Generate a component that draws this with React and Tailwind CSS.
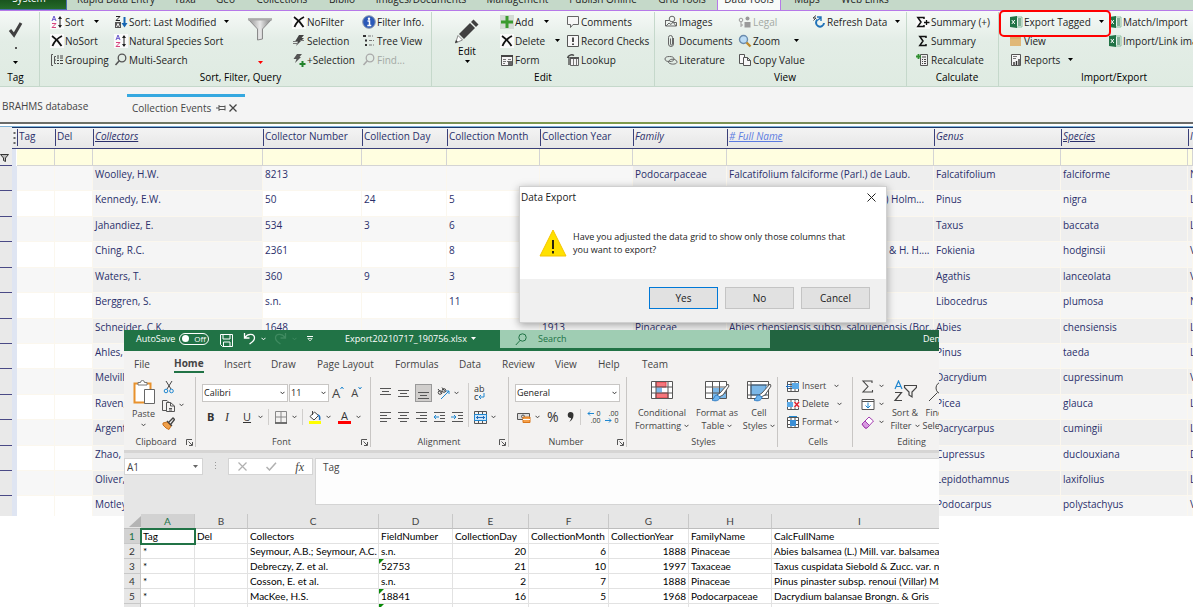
import { useState } from 'react';
import { clsx } from 'clsx';

/* ---------- Icons ---------- */

const Svg = ({ w = 14, h = 14, box, children, className }) => (
  <svg
    width={w}
    height={h}
    viewBox={box || `0 0 ${w} ${h}`}
    fill="none"
    aria-hidden="true"
    className={clsx('shrink-0', className)}
  >
    {children}
  </svg>
);

const Caret = ({ className = 'text-black' }) => (
  <Svg w={5} h={3} className={className}>
    <path d="M0 0h5L2.5 3z" fill="currentColor" />
  </Svg>
);

const Chevron = ({ className = 'text-[#444]' }) => (
  <Svg w={5} h={4} className={className}>
    <path d="M.5.8l2 2 2-2" stroke="currentColor" />
  </Svg>
);

const SortIcon = () => (
  <Svg>
    <rect width="14" height="14" fill="#fafafa" />
    <path d="M2 6l2-5 2 5M2.7 4.4h2.6" stroke="#6a5acd" />
    <path d="M2 8.5h4l-4 4h4" stroke="#d8457e" />
    <path d="M10 2v10" stroke="#222" />
    <path d="M8 4l2-3 2 3zM8 10l2 3 2-3z" fill="#222" />
  </Svg>
);

const SortDownIcon = () => (
  <Svg>
    <path d="M2 1.5h4L2 5.5h4" stroke="#222" />
    <path d="M1 7h6v6H1z" fill="#555" />
    <path d="M2.5 12L4 8.500l1.500 3.500" stroke="#fff" />
    <path d="M10.500 2v8" stroke="#1565b3" strokeWidth="2" />
    <path d="M7.500 8h6l-3 4.500z" fill="#1565b3" />
  </Svg>
);

const CrossIcon = () => (
  <Svg>
    <rect width="14" height="14" fill="#fafafa" />
    <path d="M2 2c3 2 7 6 9.500 10M12 2C8 4 4 8 2.500 12" stroke="#111" strokeWidth="1.800" />
  </Svg>
);

const GroupIcon = () => (
  <Svg>
    <path d="M3 1.500H1.500v11H3M6 3.500H4.500v7H6M4.500 7H6" stroke="#555" />
    <path d="M7 3h2M10 3h3M7 5h2M10 5h3M7 7.500h2M10 7.500h3M7 10.500h2M10 10.500h3" stroke="#444" />
  </Svg>
);

const SearchIcon = ({ color = '#555' }) => (
  <Svg>
    <circle cx="8" cy="5" r="3.800" stroke={color} strokeWidth="1.300" />
    <path d="M5.300 7.800L1.500 12" stroke={color} strokeWidth="1.600" />
  </Svg>
);

const BoltIcon = ({ plus }) => (
  <Svg>
    {plus ? (
      <>
        <path d="M5 1h5L7.500 4H9L3 10l1.500-4H1.500z" fill="#555" />
        <path d="M10.500 8v6M7.500 11h6" stroke="#22822b" strokeWidth="2" />
      </>
    ) : (
      <>
        <path d="M7 1h5L9.500 4H12L4 12l2-4.500H3z" fill="#444" />
        <path d="M1 7.500h5M1 9.500h5M8 6.500h4" stroke="#777" />
      </>
    )}
  </Svg>
);

const InfoIcon = () => (
  <Svg>
    <circle cx="7" cy="7" r="6.300" fill="#2b59b8" stroke="#8d99ad" />
    <circle cx="7" cy="3.700" r="1.200" fill="#fff" />
    <path d="M5.500 6h2v4.500M5.300 10.500h4" stroke="#fff" strokeWidth="1.500" />
  </Svg>
);

const TreeIcon = () => (
  <Svg>
    <path d="M1 2h3M3 6.500h2M3 11h2" stroke="#333" strokeWidth="2" />
    <path d="M6 2h5M7 6.500h5M7 11h5" stroke="#777" strokeDasharray="3 1" />
  </Svg>
);

const FunnelIcon = () => (
  <Svg w={26} h={24}>
    <defs>
      <linearGradient id="funnel" x1="0" x2="1">
        <stop offset="0" stopColor="#8c8c8c" />
        <stop offset=".5" stopColor="#e8e8e8" />
        <stop offset="1" stopColor="#777" />
      </linearGradient>
    </defs>
    <path d="M1 2h24L15.500 12v10l-5 1V12z" fill="url(#funnel)" stroke="#8a8a8a" />
    <path d="M1 2.500h24" stroke="#aaa" strokeWidth="2" />
  </Svg>
);

const PencilIcon = () => (
  <Svg w={26} h={26}>
    <path d="M5 16L16 5l5 5L10 21z" fill="#404040" />
    <path d="M17 4l2.500-2.500 5 5L22 9z" fill="#404040" />
    <path d="M4 17.500l4.500 4.500L1.500 25z" fill="#fff" stroke="#888" />
    <path d="M1 25l1-3 2 2z" fill="#333" />
  </Svg>
);

const PlusIcon = () => (
  <Svg>
    <rect width="14" height="14" fill="#d4dcd5" />
    <path d="M7 1v12M1 7h12" stroke="#3b9a2f" strokeWidth="3" />
  </Svg>
);

const FormIcon = () => (
  <Svg>
    <path d="M1.500 2.500h11v10h-11z" fill="#f4f4f4" stroke="#555" />
    <path d="M1 3h12" stroke="#444" strokeWidth="2" />
    <path d="M3 6.500h3M3 8.500h3M3 10.500h2M8 6.500h3M7 8.500h2" stroke="#777" />
    <path d="M8 8h4v4H8z" fill="#666" />
  </Svg>
);

const CommentIcon = () => (
  <Svg>
    <path d="M1.500 1.500h11v8H7L4.500 12.500V9.500h-3z" fill="#f7f7f7" stroke="#666" />
  </Svg>
);

const CheckRecordIcon = () => (
  <Svg>
    <path d="M1.500 1.500h11v11h-11z" fill="#f7f7f7" stroke="#555" />
    <path d="M7 3.500V8M7 9.500V11" stroke="#222" strokeWidth="1.600" />
  </Svg>
);

const LookupIcon = () => (
  <Svg>
    <path d="M4.500 4.500h8v8h-8z" fill="#f4f4f4" stroke="#666" />
    <path d="M4 5h9" stroke="#555" strokeWidth="2" />
    <path d="M7.500 6v6M10.500 6v6" stroke="#777" />
    <path d="M3 4v8M1.500 5C2 2 6 1 8 2.500" stroke="#444" strokeWidth="1.300" />
  </Svg>
);

const ImagesIcon = ({ color = '#666' }) => (
  <Svg>
    <circle cx="8" cy="4" r="2.800" stroke={color} />
    <path d="M1.500 5.500h4M1.500 5v6h11V7.500H10M2 11l3-3 2 1.500L9 7l3 4" stroke={color} />
  </Svg>
);

const ClipIcon = () => (
  <Svg>
    <path d="M9.500 4v6a2.500 2.500 0 01-5 0V3.500a2 2 0 014 0V10a1 1 0 01-2 0V4.500" stroke="#666" />
  </Svg>
);

const LiteratureIcon = () => (
  <Svg>
    <ellipse cx="5.500" cy="6" rx="4.500" ry="2.500" stroke="#666" />
    <path d="M4 8c0 4 9 4 9 1S6 5 5 8" stroke="#666" />
  </Svg>
);

const LegalIcon = () => (
  <Svg>
    <circle cx="9.500" cy="3.500" r="2" fill="#9a9a9a" />
    <path d="M6.500 12.500V7h6v5.500z" fill="#9a9a9a" />
    <circle cx="3" cy="5" r="1.800" stroke="#9a9a9a" />
    <path d="M3 7v5M3 10h2" stroke="#9a9a9a" />
  </Svg>
);

const ZoomIcon = () => (
  <Svg>
    <circle cx="5.500" cy="5.500" r="4" fill="#bcdcf5" stroke="#6b8cae" strokeWidth="1.400" />
    <path d="M8.500 8.500l4 4" stroke="#c08a2c" strokeWidth="2.400" />
  </Svg>
);

const CopyIcon = () => (
  <Svg>
    <path d="M1.500 1.500h5v9h-5z" fill="#f7f7f7" stroke="#555" />
    <path d="M5.500 4.500h4l3 3v5h-7zM9.500 4.500v3h3" fill="#f7f7f7" stroke="#555" />
  </Svg>
);

const RefreshIcon = () => (
  <Svg>
    <path d="M5.500 4.500a4 4 0 106.500 3.500" stroke="#1f72b8" strokeWidth="2" />
    <path d="M5 2h4v4M9 2.500L6 5" stroke="#1f72b8" strokeWidth="1.400" />
    <path d="M4 .5L1 3h3L1.500 5.500" stroke="#444" />
  </Svg>
);

const SigmaIcon = ({ plus }) => (
  <Svg>
    {plus && <rect width="14" height="14" fill="#fafafa" />}
    <g transform={plus ? undefined : 'translate(2 0)'}>
      <path d="M8 4V2.500H1.800L5 7l-3.200 4.500H8V10" stroke="#111" strokeWidth="1.500" />
    </g>
    {plus && <path d="M10.500 5v5M8 7.500h5.500" stroke="#111" strokeWidth="1.300" />}
  </Svg>
);

const CalcIcon = () => (
  <Svg>
    <path d="M4.500 1.500h7v11h-7z" fill="#eee" stroke="#555" />
    <path d="M6 4h4M6 6.500h1M8 6.500h2M6 8.500h1M8 8.500h2M6 10.500h1M8 10.500h2" stroke="#444" />
    <path d="M2.500 1v5M0 3.500h5" stroke="#2f8f2f" strokeWidth="1.800" />
  </Svg>
);

const ExcelIcon = () => (
  <Svg>
    <path d="M7 2h6v10H7z" fill="#e8f2ec" stroke="#8fbfa3" />
    <path d="M9 4h3M9 6h3M9 8h3M9 10h3" stroke="#217346" />
    <path d="M1 2l7-1v12l-7-1z" fill="#217346" />
    <path d="M2.800 5l3 4M5.800 5l-3 4" stroke="#fff" />
  </Svg>
);

const FolderIcon = () => (
  <Svg>
    <path d="M1 2h11v10H1z" fill="#e0b878" />
    <path d="M1 4h11" stroke="#cfa565" />
  </Svg>
);

const ReportIcon = () => (
  <Svg>
    <path d="M2.500 1.500h9v11h-9z" fill="#f5f5f5" stroke="#555" />
    <path d="M4 3.500h4M4 5.500h3" stroke="#777" />
    <path d="M5 12V9M7.500 12V8M10 12V6" stroke="#333" strokeWidth="1.400" />
  </Svg>
);

/* ---------- BRAHMS ribbon ---------- */

const MAIN_TABS = [
  { name: 'Rapid Data Entry', width: 'w-[98px]' },
  { name: 'Taxa', width: 'w-[40px]' },
  { name: 'Geo', width: 'w-[41px]' },
  { name: 'Collections', width: 'w-[72px]' },
  { name: 'Biblio', width: 'w-[48px]' },
  { name: 'Images/Documents', width: 'w-[110px]' },
  { name: 'Management', width: 'w-[83px]' },
  { name: 'Publish Online', width: 'w-[88px]' },
  { name: 'Grid Tools', width: 'w-[70px]' },
  { name: 'Data Tools', width: 'w-[64px]', active: true },
  { name: 'Maps', width: 'w-[52px]' },
  { name: 'Web Links', width: 'w-[64px]' },
];

const ToolButton = ({ icon, label, arrow, disabled }) => (
  <button
    type="button"
    disabled={disabled}
    className={clsx(
      'flex h-[19px] items-center whitespace-nowrap',
      disabled ? 'text-[#a3a9a4]' : 'text-[#1e1e1e]'
    )}
  >
    {icon}
    <span className="ml-px">{label}</span>
    {arrow && (
      <span className={arrow}>
        <Caret />
      </span>
    )}
  </button>
);

const ToolColumn = ({ className, children }) => (
  <div className={clsx('flex shrink-0 flex-col items-start', className)}>{children}</div>
);

const RibbonGroup = ({ title, className, children }) => (
  <section className={clsx('flex shrink-0 flex-col border-r border-[#c5d8cb]', className)}>
    <div className="flex h-[58px]">{children}</div>
    <h2 className="text-center">{title}</h2>
  </section>
);

const MainRibbon = () => (
  <header>
    <nav className="flex h-[11px] items-end overflow-hidden border-b border-[#b679e8] bg-[#c5d9c9] whitespace-nowrap">
      <button
        type="button"
        className="h-5 w-[67px] shrink-0 border-r border-b border-[#4a6cb0] bg-linear-to-b from-[#0d3d10] to-[#256b2a] pr-2 pb-1 leading-[14px] text-white"
      >
        System
      </button>
      {MAIN_TABS.map((tab) => (
        <button
          key={tab.name}
          type="button"
          className={clsx(
            'h-5 shrink-0 pb-[2px] leading-[14px] text-[#1e1e1e]',
            tab.width,
            tab.active && 'border-x border-[#b679e8] bg-[#f7faf8]'
          )}
        >
          {tab.name}
        </button>
      ))}
    </nav>

    <div className="flex h-[76px] border-b border-[#c5d8cb] bg-linear-to-b from-[#f6f9f7] via-[#e3ede6] via-40% to-[#dfebe2] pt-px">
      <RibbonGroup title="Tag" className="w-[40px] pr-2">
        <button type="button" className="flex w-8 flex-col items-center pt-[9px]" aria-label="Tag record">
          <Svg w={16} h={18}>
            <path d="M2 9l4 5L13 2" stroke="#404040" strokeWidth="3" />
          </Svg>
          <span className="mt-2 size-[2px] bg-[#555]" />
          <span className="mt-3">
            <Caret />
          </span>
        </button>
      </RibbonGroup>

      <RibbonGroup title="Sort, Filter, Query" className="w-[392px] pl-[10px]">
        <ToolColumn className="w-[64px]">
          <ToolButton icon={<SortIcon />} label="Sort" arrow="ml-[10px]" />
          <ToolButton icon={<CrossIcon />} label="NoSort" />
          <ToolButton icon={<GroupIcon />} label="Grouping" />
        </ToolColumn>
        <ToolColumn className="w-[130px]">
          <ToolButton icon={<SortDownIcon />} label="Sort: Last Modified" arrow="ml-[8px]" />
          <ToolButton icon={<SortIcon />} label="Natural Species Sort" />
          <ToolButton icon={<SearchIcon />} label="Multi-Search" />
        </ToolColumn>
        <button type="button" className="flex w-[32px] shrink-0 flex-col items-center pt-[5px]" aria-label="Filter">
          <FunnelIcon />
          <span className="mt-5">
            <Caret className="text-[#ff0000]" />
          </span>
        </button>
        <ToolColumn className="ml-4 w-[70px]">
          <ToolButton icon={<CrossIcon />} label="NoFilter" />
          <ToolButton icon={<BoltIcon />} label="Selection" />
          <ToolButton icon={<BoltIcon plus />} label="+Selection" />
        </ToolColumn>
        <ToolColumn>
          <ToolButton icon={<InfoIcon />} label="Filter Info." />
          <ToolButton icon={<TreeIcon />} label="Tree View" />
          <ToolButton icon={<SearchIcon color="#aaa" />} label="Find..." disabled />
        </ToolColumn>
      </RibbonGroup>

      <RibbonGroup title="Edit" className="w-[223px]">
        <button type="button" className="flex w-[68px] shrink-0 flex-col items-center pt-[6px] pl-[2px] leading-[14px]">
          <PencilIcon />
          <span>Edit</span>
          <span className="mt-[2px]">
            <Caret />
          </span>
        </button>
        <ToolColumn className="w-[66px]">
          <ToolButton icon={<PlusIcon />} label="Add" arrow="ml-[10px]" />
          <ToolButton icon={<CrossIcon />} label="Delete" arrow="ml-[10px]" />
          <ToolButton icon={<FormIcon />} label="Form" />
        </ToolColumn>
        <ToolColumn>
          <ToolButton icon={<CommentIcon />} label="Comments" />
          <ToolButton icon={<CheckRecordIcon />} label="Record Checks" />
          <ToolButton icon={<LookupIcon />} label="Lookup" />
        </ToolColumn>
      </RibbonGroup>

      <RibbonGroup title="View" className="w-[252px] pl-[9px]">
        <ToolColumn className="w-[74px]">
          <ToolButton icon={<ImagesIcon />} label="Images" />
          <ToolButton icon={<ClipIcon />} label="Documents" />
          <ToolButton icon={<LiteratureIcon />} label="Literature" />
        </ToolColumn>
        <ToolColumn className="w-[74px]">
          <ToolButton icon={<LegalIcon />} label="Legal" disabled />
          <ToolButton icon={<ZoomIcon />} label="Zoom" arrow="ml-[14px]" />
          <ToolButton icon={<CopyIcon />} label="Copy Value" />
        </ToolColumn>
        <ToolColumn>
          <ToolButton icon={<RefreshIcon />} label="Refresh Data" arrow="ml-[8px]" />
        </ToolColumn>
      </RibbonGroup>

      <RibbonGroup title="Calculate" className="w-[92px] pl-[9px]">
        <ToolColumn>
          <ToolButton icon={<SigmaIcon plus />} label="Summary (+)" />
          <ToolButton icon={<SigmaIcon />} label="Summary" />
          <ToolButton icon={<CalcIcon />} label="Recalculate" />
        </ToolColumn>
      </RibbonGroup>

      <RibbonGroup title="Import/Export" className="w-[221px] pl-[10px]">
        <ToolColumn className="w-[99px]">
          <div className="relative">
            <ToolButton icon={<ExcelIcon />} label="Export Tagged" arrow="ml-[8px]" />
            {/* Callout round the export command */}
            <span className="pointer-events-none absolute -top-[2px] -right-[7px] -bottom-[6px] -left-[10px] rounded-[5px] border-2 border-[#f00]" />
          </div>
          <ToolButton icon={<FolderIcon />} label="View" />
          <ToolButton icon={<ReportIcon />} label="Reports" arrow="ml-[8px]" />
        </ToolColumn>
        <ToolColumn>
          <ToolButton icon={<ExcelIcon />} label="Match/Import" />
          <ToolButton icon={<ExcelIcon />} label="Import/Link images" />
        </ToolColumn>
      </RibbonGroup>
    </div>
  </header>
);

const DocumentTabs = () => (
  <nav className="flex h-[35px] items-start bg-[#f4f4f4] text-[#444]">
    <button type="button" className="h-[35px] w-[127px] pt-[3px] pl-[2px] text-left">
      BRAHMS database
    </button>
    <div className="mt-[7px] flex h-[24px] w-[118px] items-center border-t-3 border-[#35a8e0] pl-[5px] whitespace-nowrap">
      <button type="button">Collection Events</button>
      <button type="button" aria-label="Pin tab" className="ml-[5px]">
        <Svg w={10} h={8}>
          <path d="M0 4h3M3 1v6M3 2.500h6M3 5.500h6M9 1.500v5" stroke="#555" />
        </Svg>
      </button>
      <button type="button" aria-label="Close tab" className="ml-[3px]">
        <Svg w={8} h={8}>
          <path d="M.5.5l7 7M7.500.5l-7 7" stroke="#444" strokeWidth="1.300" />
        </Svg>
      </button>
    </div>
  </nav>
);

/* ---------- Data grid ---------- */

const COLUMNS = [
  { key: 'tag', label: 'Tag', width: 'w-[38px]' },
  { key: 'del', label: 'Del', width: 'w-[38px]' },
  { key: 'collectors', label: 'Collectors', width: 'w-[170px]', shaded: true, style: 'italic underline' },
  { key: 'number', label: 'Collector Number', width: 'w-[99px]' },
  { key: 'day', label: 'Collection Day', width: 'w-[85px]' },
  { key: 'month', label: 'Collection Month', width: 'w-[93px]' },
  { key: 'year', label: 'Collection Year', width: 'w-[93px]' },
  { key: 'family', label: 'Family', width: 'w-[94px]', shaded: true, style: 'italic' },
  { key: 'fullName', label: '# Full Name', width: 'w-[207px]', shaded: true, style: 'italic underline text-[#5b7be0]' },
  { key: 'genus', label: 'Genus', width: 'w-[127px]', shaded: true, style: 'italic' },
  { key: 'species', label: 'Species', width: 'w-[127px]', shaded: true, style: 'italic underline' },
  { key: 'next', label: 'I', width: 'w-auto', shaded: true, style: 'italic' },
];

const RECORDS = [
  { collectors: 'Woolley, H.W.', number: '8213', family: 'Podocarpaceae', fullName: 'Falcatifolium falciforme (Parl.) de Laub.', genus: 'Falcatifolium', species: 'falciforme', next: 'N' },
  { collectors: 'Kennedy, E.W.', number: '50', day: '24', month: '5', fullName: 'Pinus nigra ssp. pallasiana (Lamb.) Holm...', genus: 'Pinus', species: 'nigra', next: 'L' },
  { collectors: 'Jahandiez, E.', number: '534', day: '3', month: '6', genus: 'Taxus', species: 'baccata', next: 'L' },
  { collectors: 'Ching, R.C.', number: '2361', month: '8', fullName: 'Fokienia hodginsii (Dunn) A.Henry & H. H....', genus: 'Fokienia', species: 'hodginsii', next: 'V' },
  { collectors: 'Waters, T.', number: '360', day: '9', month: '3', genus: 'Agathis', species: 'lanceolata', next: 'V' },
  { collectors: 'Berggren, S.', number: 's.n.', month: '11', genus: 'Libocedrus', species: 'plumosa', next: 'N' },
  { collectors: 'Schneider, C.K.', number: '1648', year: '1913', family: 'Pinaceae', fullName: 'Abies chensiensis subsp. salouenensis (Bor...', genus: 'Abies', species: 'chensiensis', next: 'L' },
  { collectors: 'Ahles,', genus: 'Pinus', species: 'taeda', next: 'L' },
  { collectors: 'Melville', genus: 'Dacrydium', species: 'cupressinum', next: 'V' },
  { collectors: 'Raven,', genus: 'Picea', species: 'glauca', next: 'L' },
  { collectors: 'Argent', genus: 'Dacrycarpus', species: 'cumingii', next: 'L' },
  { collectors: 'Zhao,', genus: 'Cupressus', species: 'duclouxiana', next: 'D' },
  { collectors: 'Oliver,', genus: 'Lepidothamnus', species: 'laxifolius', next: 'L' },
  { collectors: 'Motley', genus: 'Podocarpus', species: 'polystachyus', next: 'V' },
];

const cellColor = (shaded, odd) => {
  if (shaded) return odd ? 'bg-[#eeeeee]' : 'bg-[#f5f5f5]';
  return odd ? 'bg-[#f7f7f7]' : 'bg-white';
};

const DataGrid = () => (
  <div className="h-[394px] overflow-hidden">
    {/* Sliver of the start picture behind the grid */}
    <div className="h-[2px] bg-linear-to-r from-[#6a6a6a] via-[#7f9d4a] to-[#6a6a6a]" />
    <div className="h-[3px] border-b border-[#7fb2d8] bg-white" />
    <table className="h-[395px] w-full table-fixed border-separate border-spacing-0 text-left text-[#2a2f6b]">
      <colgroup>
        <col className="w-[12px]" />
        <col className="w-[5px]" />
        {COLUMNS.map((col) => (
          <col key={col.key} className={col.width} />
        ))}
      </colgroup>
      <thead>
        <tr className="h-[22px] bg-linear-to-b from-[#f4f4f4] to-[#e6e6e6]">
          <th className="bg-[#ececec] p-0" />
          <th className="border-t border-b border-t-[#1d3768] border-b-[#3a3f78] p-0">
            <Svg w={3} h={15} className="ml-px">
              <path d="M1.500 1v14" stroke="#666" strokeWidth="2" strokeDasharray="2 3" />
            </Svg>
          </th>
          {COLUMNS.map((col) => (
            <th
              key={col.key}
              className="border-t border-b border-t-[#1d3768] border-b-[#3a3f78] p-0 pt-px align-top font-normal whitespace-nowrap"
            >
              <div className={clsx('h-[17px] border-l border-[#3a3f78] pl-px leading-[15px]', col.style)}>{col.label}</div>
            </th>
          ))}
        </tr>
      </thead>
      <tbody>
        <tr className="h-[17px]">
          <td className="border-b border-[#4a4a86] bg-[#ececec] p-0">
            <Svg w={9} h={9}>
              <path d="M.5 1.500h8L5.500 5v3.500l-2-1V5z" fill="#bbb" stroke="#333" />
            </Svg>
          </td>
          <td className="border-r border-white bg-[#dfe5f2] p-0" />
          {COLUMNS.map((col) => (
            <td key={col.key} className="border-r border-b border-[#d4d4d4] bg-[#fffee0] p-0">
              <input aria-label={`Filter ${col.label}`} className="block h-[15px] w-full px-1 outline-none" />
            </td>
          ))}
        </tr>
        {RECORDS.map((row, i) => (
          <tr key={row.collectors}>
            <td className="border-b border-[#4a4a86] bg-[#e9e9e9] p-0" />
            <td className="bg-[#dfe5f2] p-0" />
            {COLUMNS.map((col) => (
              <td
                key={col.key}
                className={clsx(
                  'border-r border-b border-[#fbf7ee] p-0 pl-[2px] align-top leading-[17px] whitespace-nowrap',
                  cellColor(col.shaded, i % 2 === 0)
                )}
              >
                {row[col.key]}
              </td>
            ))}
          </tr>
        ))}
      </tbody>
    </table>
  </div>
);

/* ---------- Export prompt ---------- */

const ExportDialog = () => (
  <div
    role="dialog"
    aria-labelledby="export-title"
    className="absolute top-[186px] left-[519px] w-[368px] border border-[#d0d0d0] bg-white text-[#1a1a1a] shadow-[0_2px_8px_rgba(0,0,0,0.35)]"
  >
    <div className="flex h-5 items-center justify-between pr-[10px] pl-px">
      <h2 id="export-title">Data Export</h2>
      <button type="button" aria-label="Close">
        <Svg w={9} h={9}>
          <path d="M.5.5l8 8M8.500.5l-8 8" stroke="#222" />
        </Svg>
      </button>
    </div>
    <div className="flex h-[72px] items-center gap-[6px] pl-[19px]">
      <Svg w={28} h={28}>
        <path d="M14 1l13 26H1z" fill="#ffe100" stroke="#f5c400" />
        <path d="M14 11v9M14 22v2.500" stroke="#111" strokeWidth="1.800" />
      </Svg>
      <p className="text-[9px] leading-[13px] whitespace-nowrap">
        Have you adjusted the data grid to show only those columns that
        <br />
        you want to export?
      </p>
    </div>
    <div className="flex h-[43px] items-center justify-end gap-[7px] bg-[#f0f0f0] pr-4 pb-[5px]">
      <button type="button" className="h-[22px] w-[69px] border border-[#0078d7] bg-[#e1e1e1]">
        Yes
      </button>
      <button type="button" className="h-[22px] w-[69px] border border-[#c4c4c4] bg-[#e1e1e1]">
        No
      </button>
      <button type="button" className="h-[22px] w-[69px] border border-[#c4c4c4] bg-[#e1e1e1]">
        Cancel
      </button>
    </div>
  </div>
);

/* ---------- Excel window ---------- */

const XL_TABS = [
  { name: 'File', width: 'w-[40px]' },
  { name: 'Home', width: 'w-[50px]', active: true },
  { name: 'Insert', width: 'w-[47px]' },
  { name: 'Draw', width: 'w-[46px]' },
  { name: 'Page Layout', width: 'w-[78px]' },
  { name: 'Formulas', width: 'w-[64px]' },
  { name: 'Data', width: 'w-[43px]' },
  { name: 'Review', width: 'w-[53px]' },
  { name: 'View', width: 'w-[43px]' },
  { name: 'Help', width: 'w-[44px]' },
  { name: 'Team', width: 'w-[43px]' },
];

const LauncherIcon = () => (
  <Svg w={7} h={7}>
    <path d="M.5 6V.5H6M2.500 2.500l3.500 3.500M6.500 3v3.500H3" stroke="#555" />
  </Svg>
);

const XlGroup = ({ title, launcher, className, children }) => (
  <section className={clsx('flex h-[70px] shrink-0 flex-col border-r border-[#c8c6c4]', className)}>
    <div className="flex h-[60px]">{children}</div>
    <div className="flex h-[10px] items-center pr-[2px] text-[9px] text-[#444]">
      <h3 className="flex-1 text-center">{title}</h3>
      {launcher && (
        <button type="button" aria-label={`${title} settings`}>
          <LauncherIcon />
        </button>
      )}
    </div>
  </section>
);

const IconButton = ({ label, className, arrow, children }) => (
  <button type="button" aria-label={label} className={clsx('flex h-[18px] items-center gap-[4px]', className)}>
    {children}
    {arrow && <Chevron />}
  </button>
);

const Combo = ({ label, value, className }) => (
  <div className={clsx('relative h-[18px] border border-[#c8c6c4] bg-white', className)}>
    <select
      aria-label={label}
      className="block h-4 w-full appearance-none bg-transparent pl-[1px] text-[9px] leading-4 text-[#222] outline-none"
    >
      <option>{value}</option>
    </select>
    <Chevron className="pointer-events-none absolute top-[6px] right-[2px] text-[#333]" />
  </div>
);

const LinesIcon = ({ d }) => (
  <Svg w={13} h={13}>
    <path d={d} stroke="#555" />
  </Svg>
);

const IndentIcon = ({ flip }) => (
  <Svg w={13} h={13}>
    <path d="M1 1.500h11M7 4.500h5M7 7.500h5M1 10.500h11" stroke="#555" />
    {flip ? (
      <path d="M0 6h4.500M3 4l2 2-2 2" stroke="#1f87d0" />
    ) : (
      <path d="M1 6h5M3 4L1 6l2 2" stroke="#1f87d0" />
    )}
  </Svg>
);

const DecimalButton = ({ label, top, bottom, arrowTop }) => (
  <button type="button" aria-label={label} className="flex w-[14px] flex-col text-[7px] leading-[7px] text-[#333]">
    <span className="flex w-full items-center justify-between">
      {arrowTop && (
        <Svg w={7} h={5}>
          <path d="M7 2.500H1M3 .5l-2 2 2 2" stroke="#1f87d0" />
        </Svg>
      )}
      <span className="ml-auto">{top}</span>
    </span>
    <span className="flex w-full items-center justify-between">
      {!arrowTop && (
        <Svg w={7} h={5}>
          <path d="M0 2.500h6M4 .5l2 2-2 2" stroke="#1f87d0" />
        </Svg>
      )}
      <span className="ml-auto">{bottom}</span>
    </span>
  </button>
);

const Brush = () => (
  <>
    <path d="M24 5l-8 9-3 2 2 2 4-2 6-9z" fill="#fff" stroke="#555" />
    <path d="M13 16c-3 0-2 3-5 5 4 2 8 0 8-3z" fill="#6cb4ee" stroke="#2f7cc4" />
  </>
);

const ConditionalIcon = () => (
  <Svg w={24} h={24}>
    <path d="M1.500 2.500h21v17h-21z" fill="#fff" />
    <path d="M6 3h10v5H6zM6 14h12v5H6z" fill="#f5767c" stroke="#e04048" />
    <path d="M6 8.500h6v5H6z" fill="#7cb8e8" />
    <path d="M1.500 2.500h21v17h-21zM1.500 8h21M1.500 14h21M6 2.500v17M18 2.500v17" stroke="#555" />
  </Svg>
);

const FormatTableIcon = () => (
  <Svg w={26} h={24}>
    <path d="M1.500 2.500h21v17h-21z" fill="#fff" />
    <path d="M9 9h13v10H9z" fill="#7cb8e8" />
    <path d="M1.500 2.500h21v17h-21zM1.500 8h21M1.500 14h21M8.500 2.500v17M15.500 2.500v17" stroke="#555" />
    <Brush />
  </Svg>
);

const CellStylesIcon = () => (
  <Svg w={26} h={24}>
    <path d="M1.500 2.500h21v17h-21z" fill="#fff" />
    <path d="M5 6h15v10H5z" fill="#7cb8e8" stroke="#2f7cc4" />
    <path d="M1.500 2.500h21v17h-21zM1.500 6h21M5 2.500v17M1.500 16h21" stroke="#555" />
    <Brush />
  </Svg>
);

const BigButton = ({ icon, top, bottom, className }) => (
  <button
    type="button"
    className={clsx('flex shrink-0 flex-col items-center text-[9px] leading-[13px] whitespace-nowrap text-[#444]', className)}
  >
    {icon}
    <span className="mt-[3px]">{top}</span>
    <span className="flex items-center gap-[3px]">
      {bottom}
      <Chevron />
    </span>
  </button>
);

const CellsIcon = ({ kind }) => (
  <Svg w={14} h={13}>
    <path d="M1.500 1.500h11v10h-11z" fill="#fff" stroke="#555" />
    <path d="M1.500 4.500h11M1.500 8.500h11M5 1.500v10M9 1.500v10" stroke="#555" />
    {kind === 'insert' && (
      <>
        <path d="M6 3h7v6H6z" fill="#5aa9e6" />
        <path d="M6 6.500H0M3 4L.5 6.500 3 9" stroke="#1f6fbf" />
      </>
    )}
    {kind === 'delete' && (
      <>
        <path d="M1 4h6v5H1z" fill="#5aa9e6" />
        <path d="M7 3.500h7v6H7z" fill="#f3f2f1" />
        <path d="M8.500 4l4.500 5M13 4L8.500 9" stroke="#e02030" strokeWidth="1.400" />
      </>
    )}
    {kind === 'format' && (
      <>
        <path d="M4 4h6v6H4z" fill="#3b8fd6" />
        <path d="M3 .5h8" stroke="#1f87d0" />
      </>
    )}
  </Svg>
);

const ExcelTitleBar = () => {
  const [autoSave, setAutoSave] = useState(false);

  return (
    <div className="flex h-[21px] items-start bg-[#217346] text-white">
      <label className="flex h-[17px] w-[96px] shrink-0 items-center gap-[4px] pl-[12px] text-[9px]">
        AutoSave
        <input
          type="checkbox"
          className="sr-only"
          checked={autoSave}
          onChange={(e) => setAutoSave(e.target.checked)}
        />
        <span className="flex h-3 w-[30px] shrink-0 items-center gap-[5px] rounded-full border border-white pl-[2px] text-[8px]">
          <span className="size-[7px] rounded-full bg-white" />
          {autoSave ? 'On' : 'Off'}
        </span>
      </label>
      <button type="button" aria-label="Save" className="mt-[3px] h-[14px]">
        <Svg w={13} h={13}>
          <path d="M.5.5h12v12H2.500l-2-2zM3 .5v4.500h7V.5M3.500 12V8h6.500v4" stroke="#fff" />
        </Svg>
      </button>
      <button type="button" aria-label="Undo" className="mt-[2px] ml-[10px] flex items-center gap-[5px]">
        <Svg w={13} h={13}>
          <path d="M1.500 1v5h5M2 5.500C5 1 11.500 1.500 11.500 6c0 3-3 4.500-5 6" stroke="#fff" strokeWidth="1.300" />
        </Svg>
        <Chevron className="text-white" />
      </button>
      <button type="button" aria-label="Redo" disabled className="mt-[2px] ml-[8px] flex items-center gap-[5px]">
        <Svg w={13} h={13}>
          <path d="M11.500 1v5h-5M11 5.500C8 1 1.500 1.500 1.500 6c0 3 3 4.500 5 6" stroke="#3f8a60" strokeWidth="1.300" />
        </Svg>
        <Chevron className="text-[#3f8a60]" />
      </button>
      <button type="button" aria-label="Customize toolbar" className="mt-[6px] ml-[10px]">
        <Svg w={6} h={6}>
          <path d="M0 .5h6" stroke="#fff" />
          <path d="M.8 2.500h4.400L3 5z" stroke="#fff" strokeWidth=".7" />
        </Svg>
      </button>
      <button type="button" className="ml-[32px] flex h-[17px] w-[155px] shrink-0 items-center gap-[4px] text-[9px]">
        Export20210717_190756.xlsx
        <Caret className="text-white" />
      </button>
      <label className="flex h-[18px] w-[270px] shrink-0 items-center bg-[#9fcdb3] pl-[15px]">
        <Svg w={13} h={13}>
          <circle cx="7.500" cy="4.500" r="3.700" stroke="#217346" />
          <path d="M5 7.500L.8 12" stroke="#217346" />
        </Svg>
        <input
          aria-label="Search"
          placeholder="Search"
          className="ml-[10px] w-[200px] text-[9px] outline-none placeholder:text-[#217346]"
        />
      </label>
      <div className="flex h-full flex-1 justify-end overflow-hidden bg-[#226440] whitespace-nowrap">
        <span className="w-4 text-[9px] leading-[17px]">Denis</span>
      </div>
    </div>
  );
};

const ExcelRibbon = () => (
  <>
    <nav className="flex h-[26px] items-start pt-[4px] pl-[10px] whitespace-nowrap text-[#444]">
      {XL_TABS.map((tab) => (
        <div key={tab.name} className={clsx('shrink-0', tab.width)}>
          <button
            type="button"
            className={clsx('h-[18px] leading-[16px]', tab.active && 'border-b-2 border-[#217346] font-bold')}
          >
            {tab.name}
          </button>
        </div>
      ))}
    </nav>
    <div className="flex h-[73px] overflow-hidden">
      <XlGroup title="Clipboard" launcher className="w-[72px] pl-[2px]">
        <button type="button" className="flex w-[35px] shrink-0 flex-col items-center pt-[2px] text-[9px] leading-[13px] text-[#444]">
          <Svg w={24} h={26}>
            <path d="M2.500 4.500h16v19h-16z" fill="#fff" stroke="#e8912d" strokeWidth="2" />
            <path d="M6 6V3.500h2.500a2 2 0 014 0H15V6z" fill="#fff" stroke="#777" />
            <path d="M12.500 10.500h10v14h-10z" fill="#fff" stroke="#666" />
          </Svg>
          <span className="mt-[2px]">Paste</span>
          <span className="mt-[3px]">
            <Chevron />
          </span>
        </button>
        <div className="flex flex-col pt-px pl-px">
          <IconButton label="Cut">
            <Svg w={13} h={13}>
              <path d="M4 0l5 8M10 0L5 8" stroke="#444" />
              <circle cx="4" cy="10" r="1.800" stroke="#1f87d0" />
              <circle cx="9.500" cy="10" r="1.800" stroke="#1f87d0" />
            </Svg>
          </IconButton>
          <IconButton label="Copy" arrow>
            <Svg w={13} h={13}>
              <path d="M4 11.500H.5v-10H5L6.500 3M4.500 3.500h4l4 3.500v5.500h-8zM8.500 3.500V7h4M7 9.500h3M7 11h3" stroke="#555" />
            </Svg>
          </IconButton>
          <IconButton label="Format painter">
            <Svg w={13} h={13}>
              <path d="M1 6l4-1 4 4-2 3.500L4 11 1 8z" fill="#f0a04b" stroke="#c9711b" />
              <path d="M5 4l5 5M7 5l4-4 1.500 1.500L9 7" stroke="#444" strokeWidth="1.300" />
            </Svg>
          </IconButton>
        </div>
      </XlGroup>

      <XlGroup title="Font" launcher className="w-[175px] pl-[6px]">
        <div className="flex flex-col gap-[6px] pt-[7px]">
          <div className="flex items-center">
            <Combo label="Font" value="Calibri" className="w-[86px]" />
            <Combo label="Font size" value="11" className="ml-px w-[40px]" />
            <button type="button" aria-label="Increase font size" className="ml-[3px] flex text-[13px] leading-[18px] text-[#444]">
              A
              <Svg w={4} h={4} className="mt-[2px]">
                <path d="M.5 3L2 1l1.500 2" stroke="#1f87d0" />
              </Svg>
            </button>
            <button type="button" aria-label="Decrease font size" className="ml-[7px] flex text-[11px] leading-[18px] text-[#444]">
              A
              <Svg w={4} h={4} className="mt-[2px]">
                <path d="M.5 1L2 3l1.500-2" stroke="#1f87d0" />
              </Svg>
            </button>
          </div>
          <div className="flex items-center pl-[5px] text-[11px] text-[#333]">
            <button type="button" className="w-[18px] text-left font-bold">B</button>
            <button type="button" className="w-[18px] text-left font-['Liberation_Serif',serif] text-[12px] italic">I</button>
            <button type="button" className="w-[15px] text-left underline">U</button>
            <Chevron />
            <span className="mx-[5px] h-4 w-px bg-[#d0cecc]" />
            <IconButton label="Borders" arrow>
              <Svg w={14} h={13}>
                <path d="M1.500.5h11v11M1.500.5v11M1.500 6h11M7 1v10" stroke="#888" />
                <path d="M1 12h12" stroke="#444" strokeWidth="1.500" />
              </Svg>
            </IconButton>
            <span className="mx-[5px] h-4 w-px bg-[#d0cecc]" />
            <IconButton label="Fill colour" arrow>
              <Svg w={14} h={13}>
                <path d="M6.500 1L2 5.500 6 9l4.500-4.500zM4.500 0v4" fill="#fff" stroke="#444" />
                <path d="M10 4c2 1 2 3 1.500 5" stroke="#1f6fbf" strokeWidth="1.600" />
                <path d="M1 10h12v3H1z" fill="#ff0" />
              </Svg>
            </IconButton>
            <button type="button" aria-label="Font colour" className="ml-[7px] flex items-center gap-[5px]">
              <span className="flex h-[13px] w-[13px] items-center justify-center border-b-3 border-[#f00] text-[11px] leading-[10px]">
                A
              </span>
              <Chevron />
            </button>
          </div>
        </div>
      </XlGroup>

      <XlGroup title="Alignment" launcher className="w-[138px] pl-[8px]">
        <div className="flex flex-col gap-[6px] pt-[7px]">
          <div className="flex items-center gap-[5px]">
            <IconButton label="Top align">
              <LinesIcon d="M1 1.500h11M3 4.500h7M1 7.500h11" />
            </IconButton>
            <IconButton label="Middle align">
              <LinesIcon d="M1 3.500h11M3 6.500h7M1 9.500h11" />
            </IconButton>
            <IconButton label="Bottom align" className="w-[17px] justify-center border border-[#999] bg-[#d0cecc]">
              <LinesIcon d="M1 5.500h11M3 8.500h7M1 11.500h11" />
            </IconButton>
            <IconButton label="Orientation" arrow>
              <Svg w={13} h={13}>
                <circle cx="3" cy="5.500" r="1.800" stroke="#444" />
                <circle cx="7" cy="3.500" r="1.800" stroke="#444" />
                <path d="M1 2l4 5M5 .5l3 4" stroke="#444" />
                <path d="M4 12l8-8M9 4h3v3" stroke="#1f87d0" />
              </Svg>
            </IconButton>
          </div>
          <div className="flex items-center gap-[5px]">
            <IconButton label="Align left">
              <LinesIcon d="M1 1.500h11M1 4.500h7M1 7.500h11M1 10.500h7" />
            </IconButton>
            <IconButton label="Centre">
              <LinesIcon d="M1 1.500h11M3 4.500h7M1 7.500h11M3 10.500h7" />
            </IconButton>
            <IconButton label="Align right">
              <LinesIcon d="M1 1.500h11M5 4.500h7M1 7.500h11M5 10.500h7" />
            </IconButton>
            <IconButton label="Decrease indent">
              <IndentIcon />
            </IconButton>
            <IconButton label="Increase indent">
              <IndentIcon flip />
            </IconButton>
          </div>
        </div>
        <span className="mt-[6px] ml-[4px] h-[44px] w-px bg-[#d0cecc]" />
        <div className="flex flex-col gap-[6px] pt-[7px] pl-[5px]">
          <IconButton label="Wrap text" className="text-[9px] leading-[8px] text-[#333]">
            <span className="w-[13px] text-left">
              ab
              <span className="flex">
                c
                <Svg w={7} h={7}>
                  <path d="M6 0v4H1M3 2L1 4l2 2" stroke="#1f87d0" />
                </Svg>
              </span>
            </span>
          </IconButton>
          <IconButton label="Merge" arrow>
            <Svg w={13} h={13}>
              <path d="M.5.5h12v12H.5zM4.500.5v3M8.500.5v3M4.500 9.500v3M8.500 9.500v3" stroke="#555" />
              <path d="M.5 3.500h12v6H.5z" fill="#cfe6f8" stroke="#1f87d0" />
              <path d="M2 6.500h9M4 5L2.500 6.500 4 8M9 5l1.500 1.500L9 8" stroke="#1f6fbf" />
            </Svg>
          </IconButton>
        </div>
      </XlGroup>

      <XlGroup title="Number" launcher className="w-[118px] pl-[6px]">
        <div className="flex flex-col gap-[6px] pt-[7px]">
          <Combo label="Number format" value="General" className="w-[105px]" />
          <div className="flex h-[18px] items-center pl-[2px] text-[#333]">
            <IconButton label="Accounting format" arrow>
              <Svg w={14} h={13}>
                <path d="M.5 2.500h12v6H.5z" fill="#ddd" stroke="#555" />
                <circle cx="6" cy="5.500" r="1.500" stroke="#555" />
                <path d="M6 6h7v5.500H6z" fill="#f5a04a" stroke="#d9771a" />
                <path d="M6 8.500h7" stroke="#fff" />
              </Svg>
            </IconButton>
            <button type="button" className="ml-[7px] text-[14px] leading-4">%</button>
            <button type="button" aria-label="Comma style" className="ml-[8px]">
              <Svg w={7} h={11}>
                <path d="M3.500 0a3 3 0 013 3c0 3-1.500 5.500-4.500 7 1.500-1.500 2-2.500 2-4A3 3 0 013.500 0z" fill="#333" />
              </Svg>
            </button>
            <span className="mx-[6px] h-4 w-px bg-[#d0cecc]" />
            <DecimalButton label="Increase decimal" top="0" bottom=".00" arrowTop />
            <span className="w-[4px]" />
            <DecimalButton label="Decrease decimal" top=".00" bottom="0" />
          </div>
        </div>
      </XlGroup>

      <XlGroup title="Styles" className="w-[151px] pl-[5px]">
        <div className="flex gap-[5px] pt-[2px]">
          <BigButton icon={<ConditionalIcon />} top="Conditional" bottom="Formatting" className="w-[60px]" />
          <BigButton icon={<FormatTableIcon />} top="Format as" bottom="Table" className="w-[40px]" />
          <BigButton icon={<CellStylesIcon />} top="Cell" bottom="Styles" className="w-[34px]" />
        </div>
      </XlGroup>

      <XlGroup title="Cells" className="w-[75px] pl-[8px]">
        <div className="flex flex-col items-start text-[9px] text-[#444]">
          <button type="button" className="flex h-[18px] items-center gap-[2px]">
            <CellsIcon kind="insert" />
            Insert
            <span className="ml-[6px]"><Chevron /></span>
          </button>
          <button type="button" className="flex h-[18px] items-center gap-[2px]">
            <CellsIcon kind="delete" />
            Delete
            <span className="ml-[6px]"><Chevron /></span>
          </button>
          <button type="button" className="flex h-[18px] items-center gap-[2px]">
            <CellsIcon kind="format" />
            Format
            <Chevron />
          </button>
        </div>
      </XlGroup>

      <XlGroup title="Editing" className="w-[112px] pl-[8px]">
        <div className="flex flex-col">
          <IconButton label="AutoSum" arrow>
            <Svg w={14} h={13}>
              <path d="M11 3V1H2l5 5.500L2 12h9.500v-2" stroke="#444" strokeWidth="1.100" />
            </Svg>
          </IconButton>
          <IconButton label="Fill" arrow>
            <Svg w={14} h={13}>
              <path d="M1 1.500h12v10H1zM1 3.500h12" fill="#fff" stroke="#555" />
              <path d="M7 4.500V10M4.500 7.500L7 10l2.500-2.500" stroke="#1f87d0" />
            </Svg>
          </IconButton>
          <IconButton label="Clear" arrow>
            <Svg w={14} h={13}>
              <path d="M1 8l7-7 4.500 4L6 12H4z" fill="#fff" stroke="#a33bb0" />
              <path d="M1 8l3-3 4.500 4.500L6 12H4z" fill="#d79be0" stroke="#a33bb0" />
            </Svg>
          </IconButton>
        </div>
        <BigButton
          icon={
            <Svg w={24} h={23} className="mt-[3px]">
              <path d="M2 9l3.500-8L9 9M3.200 6.500h4.600" stroke="#1f87d0" strokeWidth="1.200" />
              <path d="M2 12.500h6.500L2 20.500h7" stroke="#444" strokeWidth="1.200" />
              <path d="M11.500 5.500h12v2L19 12v5l-3-2v-3l-4.500-4.500z" stroke="#444" strokeWidth="1.200" />
            </Svg>
          }
          top="Sort &"
          bottom="Filter"
          className="ml-[4px] w-[34px]"
        />
        <BigButton
          icon={
            <Svg w={24} h={23} className="mt-[3px]">
              <circle cx="15" cy="8" r="6" stroke="#444" />
              <path d="M10.500 12.500L2 21" stroke="#444" />
            </Svg>
          }
          top="Find &"
          bottom="Select"
          className="w-[34px]"
        />
      </XlGroup>
    </div>
  </>
);

const FormulaBar = () => (
  <div className="flex h-[64px] items-start border-t-3 border-[#d6d5d4] bg-[#e6e6e6] pt-[5px] text-[#444]">
    <div className="flex h-[17px] w-[79px] shrink-0 items-center border border-[#d4d4d4] bg-white pr-[4px] pl-[2px]">
      <input aria-label="Name box" defaultValue="A1" className="min-w-0 flex-1 outline-none" />
      <Caret className="text-[#666]" />
    </div>
    <Svg w={3} h={9} className="mx-[11px] mt-[4px]">
      <path d="M1.500 0v9" stroke="#999" strokeDasharray="1 2" />
    </Svg>
    <div className="flex h-[17px] w-[85px] shrink-0 items-center justify-between border border-[#d4d4d4] bg-white pr-[8px] pl-[9px]">
      <button type="button" aria-label="Cancel entry">
        <Svg w={9} h={9}>
          <path d="M.5.5l8 8M8.500.5l-8 8" stroke="#b0b0b0" strokeWidth="1.200" />
        </Svg>
      </button>
      <button type="button" aria-label="Accept entry">
        <Svg w={11} h={9}>
          <path d="M.5 5l3 3L10 .8" stroke="#b0b0b0" strokeWidth="1.500" />
        </Svg>
      </button>
      <button type="button" className="font-['Liberation_Serif',serif] text-[12px] italic">
        fx
      </button>
    </div>
    <textarea
      aria-label="Formula"
      defaultValue="Tag"
      className="ml-[2px] block h-[47px] flex-1 resize-none overflow-hidden border border-r-0 border-[#d4d4d4] bg-[#fdfdfd] pl-[7px] leading-4 outline-none"
    />
  </div>
);

const SHEET_COLUMNS = [
  { letter: 'A', width: 'w-[54px]' },
  { letter: 'B', width: 'w-[53px]' },
  { letter: 'C', width: 'w-[131px]' },
  { letter: 'D', width: 'w-[74px]' },
  { letter: 'E', width: 'w-[76px]', numeric: true },
  { letter: 'F', width: 'w-[80px]', numeric: true },
  { letter: 'G', width: 'w-[80px]', numeric: true },
  { letter: 'H', width: 'w-[83px]' },
  { letter: 'I', width: 'w-[176px]' },
];

const SHEET_ROWS = [
  ['Tag', 'Del', 'Collectors', 'FieldNumber', 'CollectionDay', 'CollectionMonth', 'CollectionYear', 'FamilyName', 'CalcFullName'],
  ['*', '', 'Seymour, A.B.; Seymour, A.C.', 's.n.', '20', '6', '1888', 'Pinaceae', 'Abies balsamea (L.) Mill. var. balsamea'],
  ['*', '', 'Debreczy, Z. et al.', '52753', '21', '10', '1997', 'Taxaceae', 'Taxus cuspidata Siebold & Zucc. var. nana'],
  ['*', '', 'Cosson, E. et al.', 's.n.', '2', '7', '1888', 'Pinaceae', 'Pinus pinaster subsp. renoui (Villar) Maire'],
  ['*', '', 'MacKee, H.S.', '18841', '16', '5', '1968', 'Podocarpaceae', 'Dacrydium balansae Brongn. & Gris'],
  ['*', '', 'Coode, P.H.', '3417', '28', '10', '1974', 'Pinaceae', 'Pinus contorta Douglas (L.) var. contorta'],
];

const Sheet = () => (
  <table className="w-[824px] table-fixed border-separate border-spacing-0 bg-white font-[Lato,sans-serif] text-[10px] leading-[14px] text-black">
    <colgroup>
      <col className="w-[17px]" />
      {SHEET_COLUMNS.map((col) => (
        <col key={col.letter} className={col.width} />
      ))}
    </colgroup>
    <thead>
      <tr className="bg-[#e6e6e6] text-[#444]">
        <th className="border-b border-[#bdbdbd] p-0">
          <Svg w={12} h={11} className="ml-auto">
            <path d="M12 0v11H0z" fill="#b4b4b4" />
          </Svg>
        </th>
        {SHEET_COLUMNS.map((col, i) => (
          <th
            key={col.letter}
            className={clsx(
              'border-r border-b border-r-[#c8c8c8] p-0 font-normal',
              i === 0 ? 'border-b-[#217346] bg-[#d2d2d2] text-[#217346]' : 'border-b-[#bdbdbd]'
            )}
          >
            {col.letter}
          </th>
        ))}
      </tr>
    </thead>
    <tbody>
      {SHEET_ROWS.map((row, r) => (
        <tr key={r}>
          <th
            className={clsx(
              'border-r border-b border-[#c8c8c8] p-0 font-normal',
              r === 0 ? 'bg-[#d2d2d2] text-[#217346]' : 'bg-[#e6e6e6] text-[#333]'
            )}
          >
            {r + 1}
          </th>
          {row.map((value, c) => {
            const selected = r === 0 && c === 0;
            const asText = c === 3 && r > 0 && value !== 's.n.';
            return (
              <td
                key={c}
                className={clsx(
                  'relative border-r border-b border-[#e2e2e2] p-0 px-[2px] whitespace-nowrap',
                  r > 0 && SHEET_COLUMNS[c].numeric && 'text-right',
                  selected ? 'z-10 outline-2 -outline-offset-1 outline-[#217346]' : 'overflow-hidden'
                )}
              >
                {asText && (
                  <Svg w={5} h={5} className="absolute top-0 left-0">
                    <path d="M0 0h5L0 5z" fill="#0a8a0a" />
                  </Svg>
                )}
                {value}
              </td>
            );
          })}
        </tr>
      ))}
    </tbody>
  </table>
);

const ExcelWindow = () => (
  <div className="absolute top-[330px] bottom-0 left-[124px] w-[815px] overflow-hidden bg-[#f3f2f1]">
    <ExcelTitleBar />
    <ExcelRibbon />
    <FormulaBar />
    <Sheet />
  </div>
);

const App = () => (
  <div className="relative h-screen overflow-hidden bg-white font-['Open_Sans','Noto_Sans',sans-serif] text-[10px] leading-[14px]">
    <MainRibbon />
    <DocumentTabs />
    <DataGrid />
    <ExportDialog />
    <ExcelWindow />
  </div>
);

export default App;
